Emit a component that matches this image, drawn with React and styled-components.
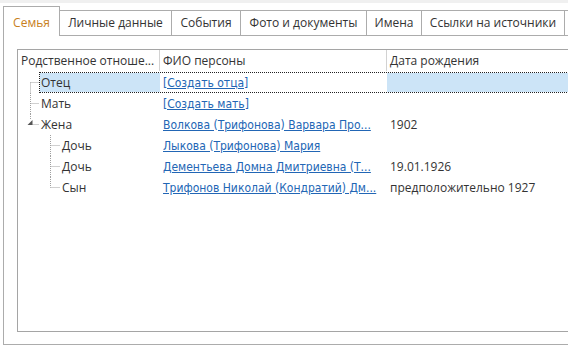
import React from "react";
import styled, { createGlobalStyle } from "styled-components";

const Global = createGlobalStyle`
  html, body { margin: 0; padding: 0; background: #ffffff; }
  body { font-family: "Open Sans", "Noto Sans", sans-serif; font-size: 12px; color: #333; }
  #root { width: 568px; height: 350px; overflow: hidden; }
`;

const Window = styled.div`
  width: 568px;
  height: 350px;
  border-top: 3px solid #f0f0f0;
  box-sizing: border-box;
  background: #fff;
  overflow: hidden;
`;

const TabBar = styled.div`
  display: flex;
  align-items: flex-end;
  height: 32px;
  padding-left: 3px;
  position: relative;
  z-index: 1;
`;

const Tab = styled.div`
  width: ${(p) => p.$w}px;
  height: ${(p) => (p.$active ? "30px" : "25px")};
  margin-bottom: ${(p) => (p.$active ? "-1px" : "0")};
  padding-bottom: ${(p) => (p.$active ? "5px" : "4px")};
  box-sizing: border-box;
  display: flex;
  align-items: flex-end;
  justify-content: center;
  line-height: 16px;
  border: 1px solid #acacac;
  border-bottom: none;
  margin-left: ${(p) => (p.$first ? "0" : "-1px")};
  background: #fff;
  color: ${(p) => (p.$active ? "#c8801c" : "#333")};
  white-space: nowrap;
  overflow: hidden;
  flex-shrink: 0;
`;

const Panel = styled.div`
  width: 640px;
  height: 310px;
  margin-left: 3px;
  border: 1px solid #acacac;
  box-sizing: border-box;
  padding: 13px 0 12px 13px;
  display: flex;
  flex-direction: column;
`;

const List = styled.div`
  flex: 1;
  border: 1px solid #a5a5a5;
  display: flex;
  flex-direction: column;
`;

const Header = styled.div`
  display: flex;
  height: 22px;
  flex-shrink: 0;
`;

const HeadCell = styled.div`
  width: ${(p) => (p.$w ? `${p.$w}px` : "auto")};
  flex: ${(p) => (p.$w ? "0 0 auto" : "1")};
  box-sizing: border-box;
  height: 21px;
  padding-left: 3px;
  display: flex;
  align-items: center;
  border-right: ${(p) => (p.$w ? "1px solid #d2d2d2" : "none")};
  white-space: nowrap;
  overflow: hidden;
  color: #333;
`;

const Row = styled.div`
  display: flex;
  height: 21px;
`;

const Indent = styled.svg`
  flex: 0 0 auto;
  display: block;
`;

const RowBody = styled.div`
  flex: 1;
  display: flex;
  box-sizing: border-box;
  border: 1px dotted ${(p) => (p.$selected ? "#222" : "transparent")};
  border-right: none;
`;

const LabelCell = styled.div`
  box-sizing: border-box;
  padding-left: 1px;
  display: flex;
  align-items: center;
  white-space: nowrap;
  overflow: hidden;
  background: ${(p) => (p.$selected ? "#cce4f7" : "transparent")};
  color: #333;
`;

const NameCell = styled.div`
  width: 227px;
  flex: 0 0 auto;
  box-sizing: border-box;
  padding-left: 3px;
  display: flex;
  align-items: center;
  white-space: nowrap;
  overflow: hidden;
`;

const Link = styled.a`
  font-family: "DejaVu Sans Condensed", "DejaVu Sans", Verdana, sans-serif;
  font-size: 12px;
  color: #2266b5;
  text-decoration: underline;
  cursor: pointer;
`;

const DateCell = styled.div`
  flex: 1;
  box-sizing: border-box;
  padding-left: 3px;
  display: flex;
  align-items: center;
  white-space: nowrap;
  background: ${(p) => (p.$selected ? "#cce4f7" : "transparent")};
  color: #333;
`;

const tabs = [
  { t: "Семья", w: 57 },
  { t: "Личные данные", w: 113 },
  { t: "События", w: 70 },
  { t: "Фото и документы", w: 127 },
  { t: "Имена", w: 56 },
  { t: "Ссылки на источники", w: 144 },
  { t: "", w: 80 },
];

const rows = [
  { level: 0, pos: "first", label: "Отец", name: "[Создать отца]", date: "", selected: true },
  { level: 0, pos: "mid", label: "Мать", name: "[Создать мать]", date: "" },
  { level: 0, pos: "last", label: "Жена", name: "Волкова (Трифонова) Варвара Про...", date: "1902", expanded: true },
  { level: 1, pos: "first", label: "Дочь", name: "Лыкова (Трифонова) Мария", date: "" },
  { level: 1, pos: "mid", label: "Дочь", name: "Дементьева Домна Дмитриевна (Т...", date: "19.01.1926" },
  { level: 1, pos: "last", label: "Сын", name: "Трифонов Николай (Кондратий) Дм...", date: "предположительно 1927" },
];

const COL1 = 142;

function Connector({ level, pos, expanded }) {
  const w = 21 + 21 * level;
  const x = 12.5 + 20 * level;
  const y = 10.5;
  let y1 = 0;
  let y2 = 21;
  if (level === 0 && pos === "first") y1 = y;
  if (pos === "last") y2 = y;
  const hx = expanded ? x + 2 : x;
  return (
    <Indent width={w} height={21} viewBox={`0 0 ${w} 21`}>
      <line x1={x} y1={y1} x2={x} y2={expanded ? 6 : y2} stroke="#a0a0a0" strokeDasharray="1 1" />
      <line x1={hx} y1={y} x2={w} y2={y} stroke="#a0a0a0" strokeDasharray="1 1" />
      {expanded && <polygon points={`${x + 2},6 ${x + 2},11 ${x - 3},11`} fill="#555" />}
    </Indent>
  );
}

export default function App() {
  return (
    <>
      <Global />
      <Window>
        <TabBar>
          {tabs.map((tab, i) => (
            <Tab key={i} $w={tab.w} $active={i === 0} $first={i === 0}>
              {tab.t}
            </Tab>
          ))}
        </TabBar>
        <Panel>
          <List>
            <Header>
              <HeadCell $w={COL1}>Родственное отноше...</HeadCell>
              <HeadCell $w={227}>ФИО персоны</HeadCell>
              <HeadCell>Дата рождения</HeadCell>
            </Header>
            {rows.map((r, i) => {
              const indent = 21 + 21 * r.level;
              return (
                <Row key={i}>
                  <Connector level={r.level} pos={r.pos} expanded={r.expanded} />
                  <RowBody $selected={r.selected}>
                    <LabelCell $selected={r.selected} style={{ width: COL1 - indent - 1 }}>
                      {r.label}
                    </LabelCell>
                    <NameCell>
                      <Link>{r.name}</Link>
                    </NameCell>
                    <DateCell $selected={r.selected}>{r.date}</DateCell>
                  </RowBody>
                </Row>
              );
            })}
          </List>
        </Panel>
      </Window>
    </>
  );
}
